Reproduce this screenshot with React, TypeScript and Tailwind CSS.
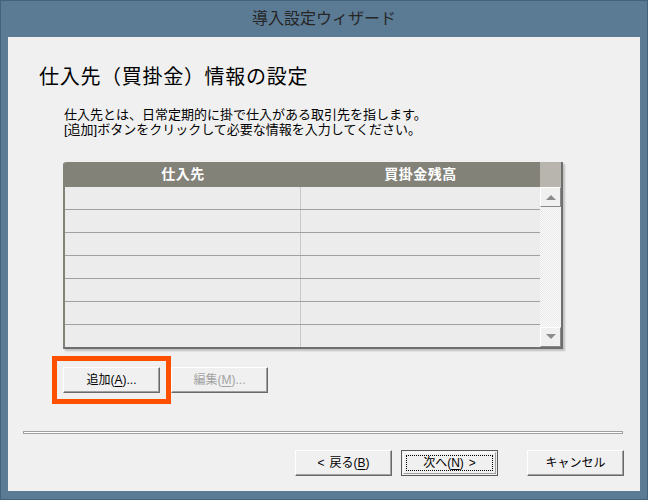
import React from 'react';

// Latin first so line boxes stay tight; Japanese falls back to Noto CJK
const font = "font-['Liberation_Sans','Noto_Sans_CJK_JP','Noto_Sans_CJK_SC',sans-serif]";

// classic raised button look (text colour is set per button)
const btnBase =
  'flex items-center justify-center h-[26px] w-[97px] bg-[#f0f0f0] text-[12px] border border-t-white border-l-white border-r-[#696969] border-b-[#696969] shadow-[inset_-1px_-1px_0_#a0a0a0]';

const Key: React.FC<{ k: string }> = ({ k }) => <span className="underline underline-offset-2">{k}</span>;

const ScrollArrow: React.FC<{ down?: boolean }> = ({ down }) => (
  <div className="h-[20px] w-full bg-[#f0f0f0] border border-t-white border-l-white border-r-[#8a8a8a] border-b-[#8a8a8a] flex items-center justify-center">
    <svg width="10" height="6" viewBox="0 0 10 6">
      {down ? <polygon points="0,0 10,0 5,5" fill="#8c8c8c" /> : <polygon points="0,6 10,6 5,1" fill="#8c8c8c" />}
    </svg>
  </div>
);

export default function App() {
  const rows = [0, 1, 2, 3, 4, 5, 6];

  return (
    <div className={`w-[648px] h-[500px] bg-[#5b7b95] border border-[#46627a] flex flex-col ${font}`}>
      {/* title bar */}
      <div className="h-[36px] flex items-center justify-center text-[16px] text-[#262626] pb-[1px]">
        導入設定ウィザード
      </div>

      {/* dialog body */}
      <div className="mx-[7px] h-[454px] bg-[#f0f0f0] flex flex-col">
        <h1 className="pt-[26px] pl-[31px] text-[20px] leading-[28px] tracking-[0.7px] text-black">
          仕入先（買掛金）情報の設定
        </h1>

        <div className="mt-[16px] pl-[56px] text-[13px] leading-[15px] text-black">
          <p>仕入先とは、日常定期的に掛で仕入がある取引先を指します。</p>
          <p>[追加]ボタンをクリックして必要な情報を入力してください。</p>
        </div>

        {/* list */}
        <div className="mt-[25px] ml-[55px] w-[500px] flex rounded-tl-[3px] overflow-hidden border-l-2 border-[#838279] border-r-2 border-r-[#6e6e6e] border-b-2 border-b-[#6e6e6e] shadow-[2px_2px_2px_rgba(0,0,0,0.2)]">
          <div className="flex-1 flex flex-col">
            <div className="h-[25px] bg-[#838279] flex text-white text-[14px] font-bold tracking-[0.5px]">
              <div className="w-[236px] flex items-center justify-center">仕入先</div>
              <div className="flex-1 flex items-center justify-center">買掛金残高</div>
            </div>
            {rows.map(r => (
              <div
                key={r}
                className={`flex bg-[#ececec] ${r < rows.length - 1 ? 'h-[23px] border-b border-[#a0a0a0]' : 'h-[22px]'}`}
              >
                <div className="w-[236px] border-r border-[#c8c8c8]" />
                <div className="flex-1" />
              </div>
            ))}
          </div>
          {/* scrollbar */}
          <div className="w-[21px] flex flex-col">
            <div className="h-[25px] bg-[#b7b5ad]" />
            <ScrollArrow />
            <div className="flex-1 bg-[repeating-conic-gradient(#e9e9e9_0_25%,#fbfbfb_0_50%)] bg-[length:2px_2px]" />
            <ScrollArrow down />
          </div>
        </div>

        {/* add / edit */}
        <div className="mt-[7px] ml-[44px] flex items-center">
          <div className="border-[5px] border-[#ff5000] px-[6px] py-[6px]">
            <button className={`${btnBase} text-black`}>
              追加(<Key k="A" />)...
            </button>
          </div>
          <button className={`${btnBase} w-[96px] text-[#a3a3a3]`}>
            編集(<Key k="M" />)...
          </button>
        </div>

        {/* separator */}
        <div className="mt-[27px] ml-[15px] w-[600px] h-[3px] border border-[#a0a0a0] bg-white" />

        {/* footer */}
        <div className="mt-[16px] ml-[287px] flex">
          <button className={`${btnBase} text-black gap-[5px]`}>
            <span>&lt;</span>
            <span>
              戻る(<Key k="B" />)
            </span>
          </button>
          <button className="ml-[9px] h-[26px] w-[97px] bg-[#f0f0f0] border border-[#5a5a5a] p-[1px] flex">
            <span className="flex-1 flex border border-t-white border-l-white border-r-[#a0a0a0] border-b-[#a0a0a0] p-[2px]">
              <span className="flex-1 flex items-center justify-center gap-[5px] border border-dotted border-black text-[12px] text-black">
                <span>
                  次へ(<Key k="N" />)
                </span>
                <span>&gt;</span>
              </span>
            </span>
          </button>
          <button className={`${btnBase} text-black ml-[29px]`}>キャンセル</button>
        </div>
      </div>
    </div>
  );
}
